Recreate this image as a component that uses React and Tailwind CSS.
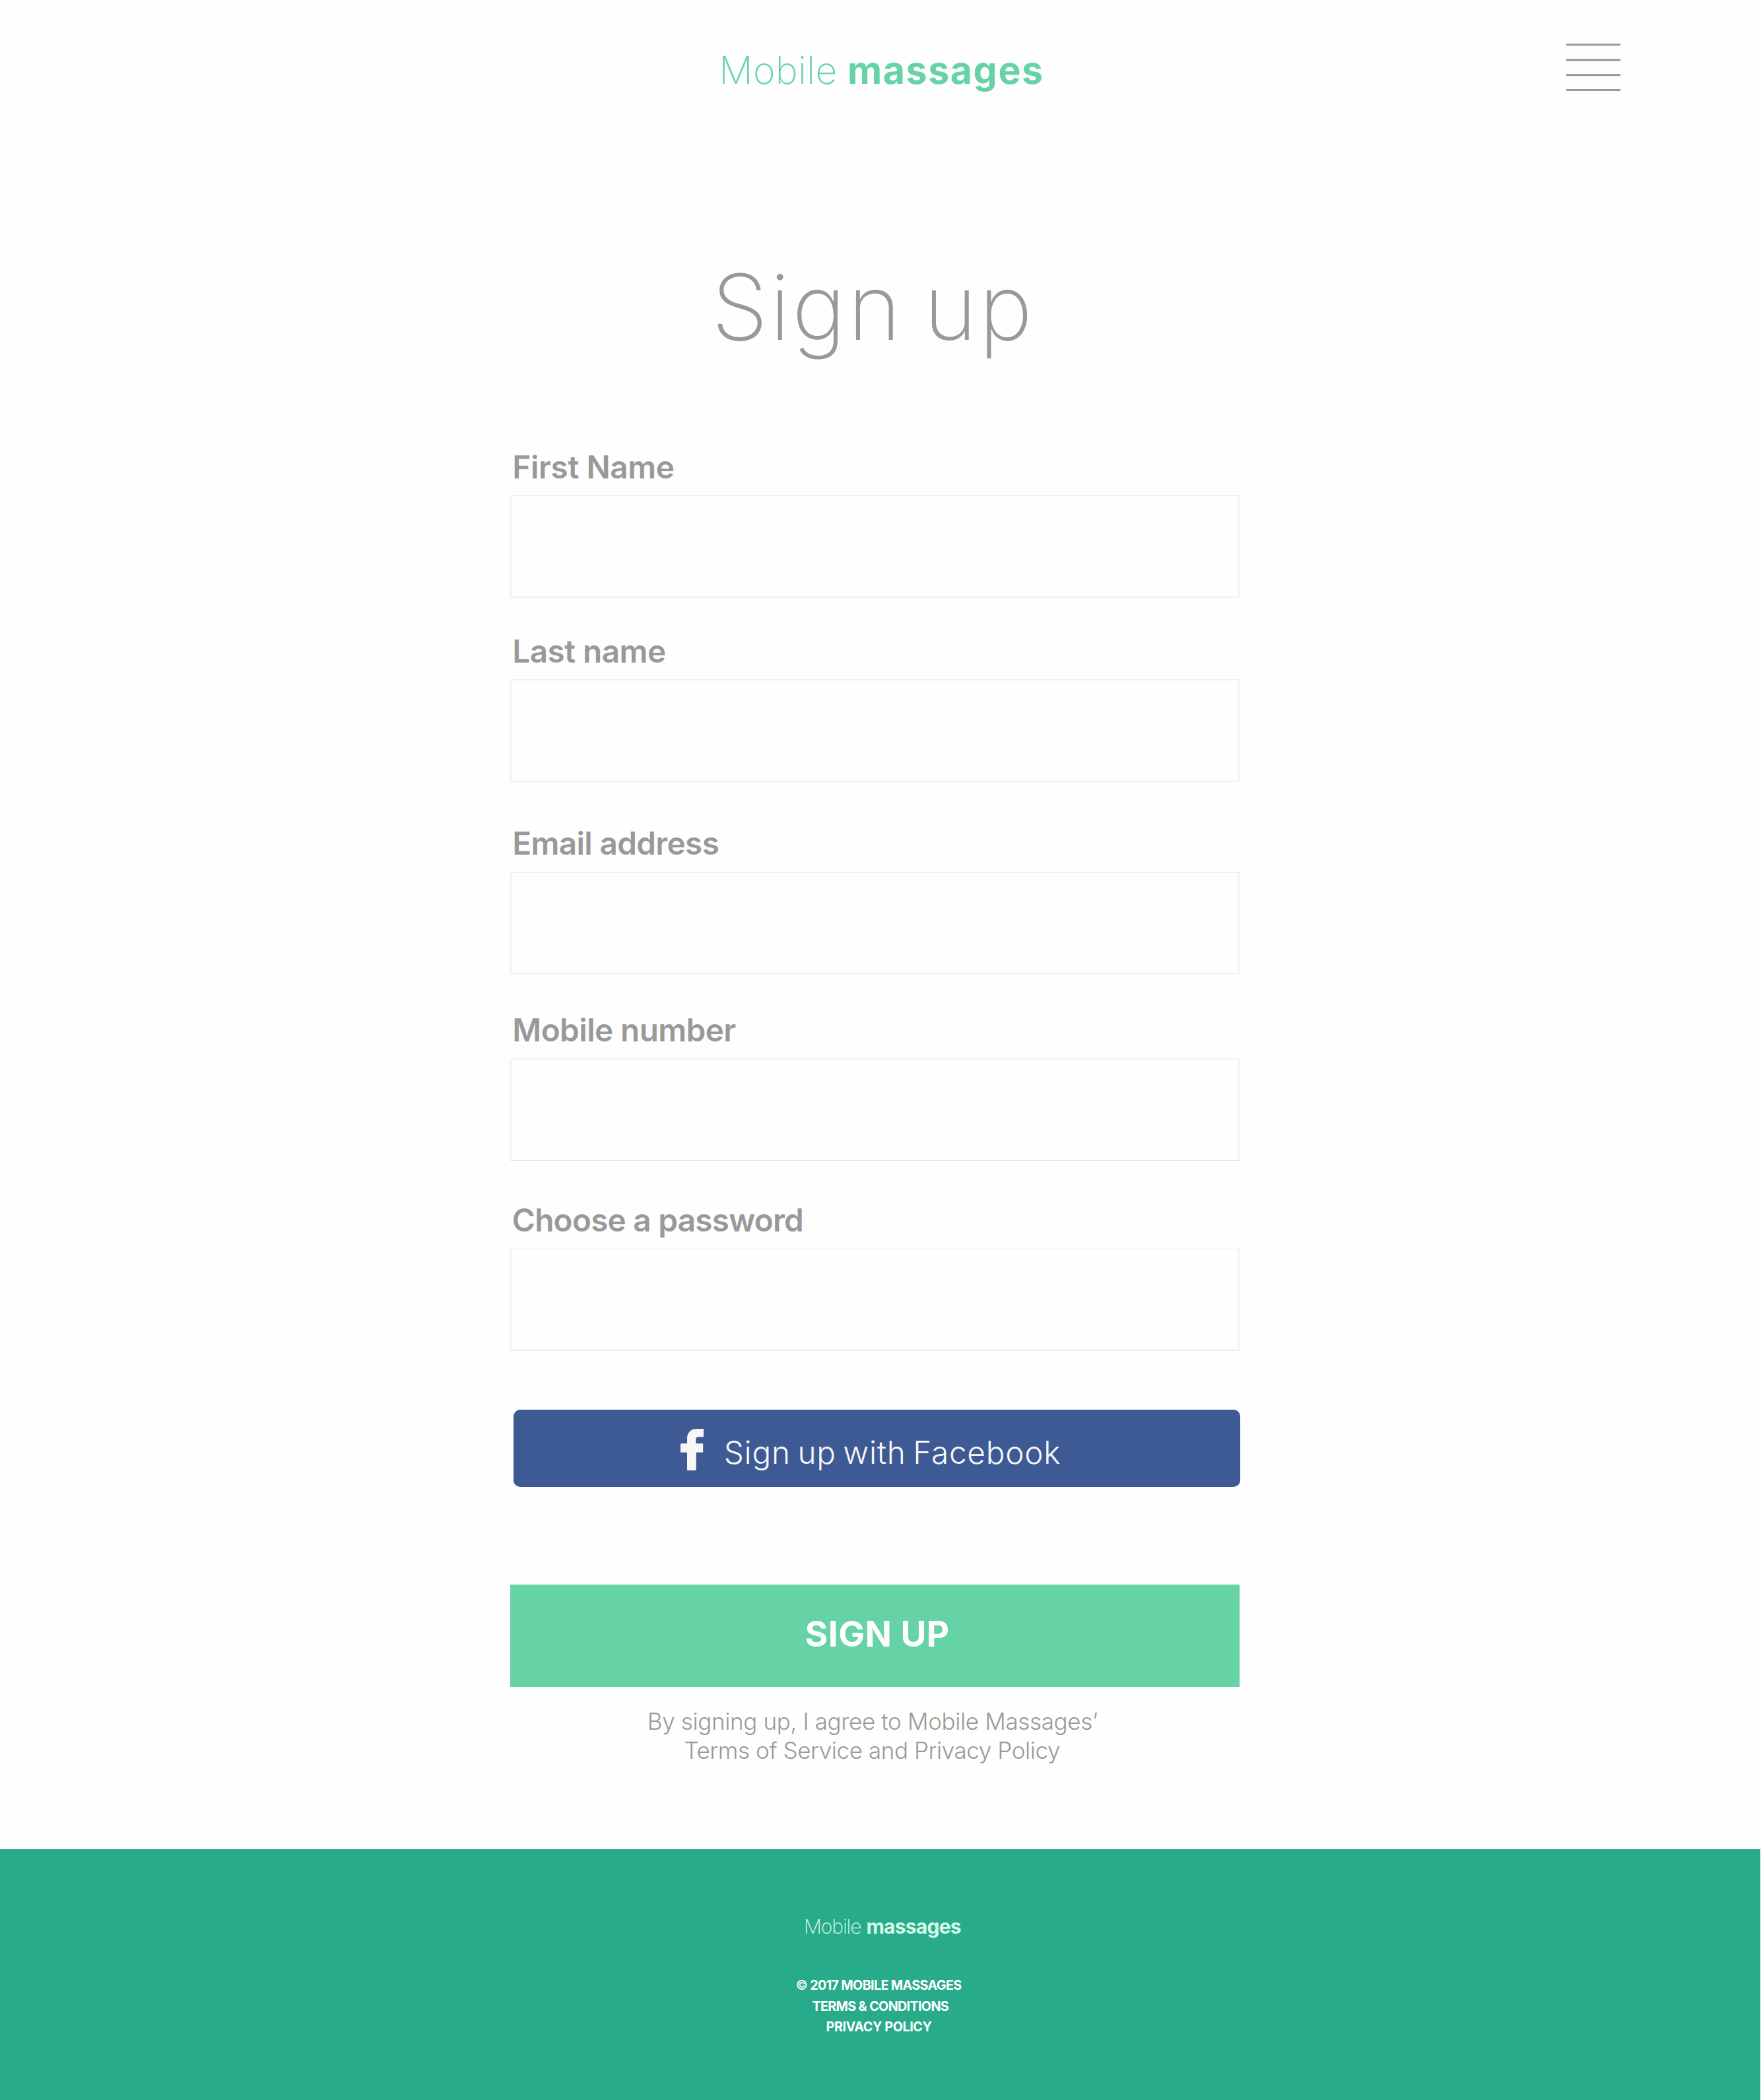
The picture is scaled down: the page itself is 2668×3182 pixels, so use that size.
const fields = [
  {
    label: "First Name",
    type: "text",
    labelClass: "mb-[12px] pl-[3.3px] tracking-[-0.37px]",
    inputClass: "h-[156px] border-y-2 border-y-[#efefef]",
    wrap: "mt-[78px]",
  },
  {
    label: "Last name",
    type: "text",
    labelClass: "mb-[12px] pl-[3.3px] tracking-[-0.52px]",
    inputClass: "h-[156px] border-y-2 border-y-[#efefef]",
    wrap: "mt-[51px]",
  },
  {
    label: "Email address",
    type: "email",
    labelClass: "mb-[13px] pl-[3.3px] tracking-[-0.65px]",
    inputClass: "h-[155px] border-t-2 border-b border-t-[#efefef] border-b-[#e4e4e4]",
    wrap: "mt-[63px]",
  },
  {
    label: "Mobile number",
    type: "tel",
    labelClass: "mb-[13px] pl-[3.3px] tracking-[-0.58px]",
    inputClass: "h-[155px] border-y border-y-[#e4e4e4]",
    wrap: "mt-[55px]",
  },
  {
    label: "Choose a password",
    type: "password",
    labelClass: "mb-[13px] pl-[2.8px] tracking-[-0.74px]",
    inputClass: "h-[155px] border-t border-b-2 border-t-[#e4e4e4] border-b-[#efefef]",
    wrap: "mt-[60px]",
  },
];

function MenuIcon() {
  return (
    <svg width="82" height="72" viewBox="0 0 82 72" fill="#999999">
      <rect y="0.2" width="82" height="3.1" />
      <rect y="23.2" width="82" height="3.1" />
      <rect y="46.1" width="82" height="3.1" />
      <rect y="69" width="82" height="3" />
    </svg>
  );
}

function FacebookIcon() {
  return (
    <svg width="35" height="63" viewBox="0 0 35 63" fill="#f7f7f7">
      <path d="M10 22.3V14.5C10 5.5 16 0 24.5 0H34Q35 0 35 1V11.3Q35 12.3 34 12.3H27Q23.3 12.3 23.3 16V22.3H33.2Q34.2 22.3 34.2 23.3V34.7Q34.2 35.7 33.2 35.7H23.7V62Q23.7 63 22.7 63H11Q10 63 10 62V35.7H1Q0 35.7 0 34.7V23.3Q0 22.3 1 22.3Z" />
    </svg>
  );
}

export default function App() {
  return (
    <div className="flex h-[3182px] w-[2668px] flex-col overflow-hidden bg-[#fefefe] font-['Inter',sans-serif] whitespace-nowrap text-[#999999]">
      <header className="flex h-[212px] shrink-0 items-start">
        <div className="ml-[1089.2px] flex w-[1283.8px] text-[57.2px] leading-[214px] text-[#66d3a6]">
          <span className="w-[194.7px] font-extralight tracking-[0.4px]">Mobile</span>
          <span className="font-bold tracking-[1.62px]">massages</span>
        </div>
        <button className="mt-[66px]" aria-label="Menu">
          <MenuIcon />
        </button>
      </header>

      <main className="ml-[773px] flex w-[1105px] flex-col">
        <h1 className="mt-[163px] pl-[304.9px] text-[137.5px] leading-[180px] font-[250] tracking-[2.9px] [word-spacing:-10px]">
          Sign up
        </h1>
        <div className="mt-[45px] flex flex-col">
          {fields.map((f) => (
            <label key={f.label} className={`flex flex-col ${f.wrap}`}>
              <span className={`h-[60px] text-[47.66px] leading-[60px] font-semibold ${f.labelClass}`}>
                {f.label}
              </span>
              <input
                type={f.type}
                className={`w-full border-x-2 border-x-[#f0f0f0] bg-transparent px-6 text-[40px] outline-none ${f.inputClass}`}
              />
            </label>
          ))}
        </div>

        <button className="mt-[89px] ml-[5px] flex h-[117px] w-[1101px] rounded-[10px] bg-[#3d5a94] pl-[253px] text-[#f7f7f7]">
          <span className="mt-[29px] w-[65.7px]">
            <FacebookIcon />
          </span>
          <span className="mt-[35px] text-[47.66px] leading-[60px] font-light tracking-[0.78px] [word-spacing:-3.6px]">
            Sign up with Facebook
          </span>
        </button>

        <button className="mt-[148px] h-[155px] bg-[#66d3a6] pb-[5px] pl-[446.6px] text-left text-[53.1px] leading-[150px] font-bold tracking-[0.45px] text-white">
          SIGN UP
        </button>

        <div className="mt-[30px] text-[35px] leading-[44px] font-light">
          <p className="pl-[207.8px] tracking-[-0.36px]">By signing up, I agree to Mobile Massages’</p>
          <p className="pl-[263.4px] tracking-[-0.42px]">Terms of Service and Privacy Policy</p>
        </div>
      </main>

      <footer className="mt-auto flex h-[380px] w-[2667px] shrink-0 flex-col bg-[#28ab8a]">
        <div className="mt-[97px] ml-[1217.9px] flex text-[30px] leading-[40px] text-[#d5fbe6]">
          <span className="w-[94.5px] font-extralight tracking-[-1.08px]">Mobile</span>
          <span className="font-bold tracking-[-0.75px]">massages</span>
        </div>
        <div className="mt-[53px] text-[19.74px] leading-[32px] font-bold text-white">
          <p className="pl-[1205.8px] tracking-[-0.65px]">
            <span className="font-medium">©</span> 2017 MOBILE MASSAGES
          </p>
          <p className="pl-[1230.4px] tracking-[-0.66px]">TERMS &amp; CONDITIONS</p>
          <p className="pl-[1251.5px] leading-[30px] tracking-[-0.41px]">PRIVACY POLICY</p>
        </div>
      </footer>
    </div>
  );
}
